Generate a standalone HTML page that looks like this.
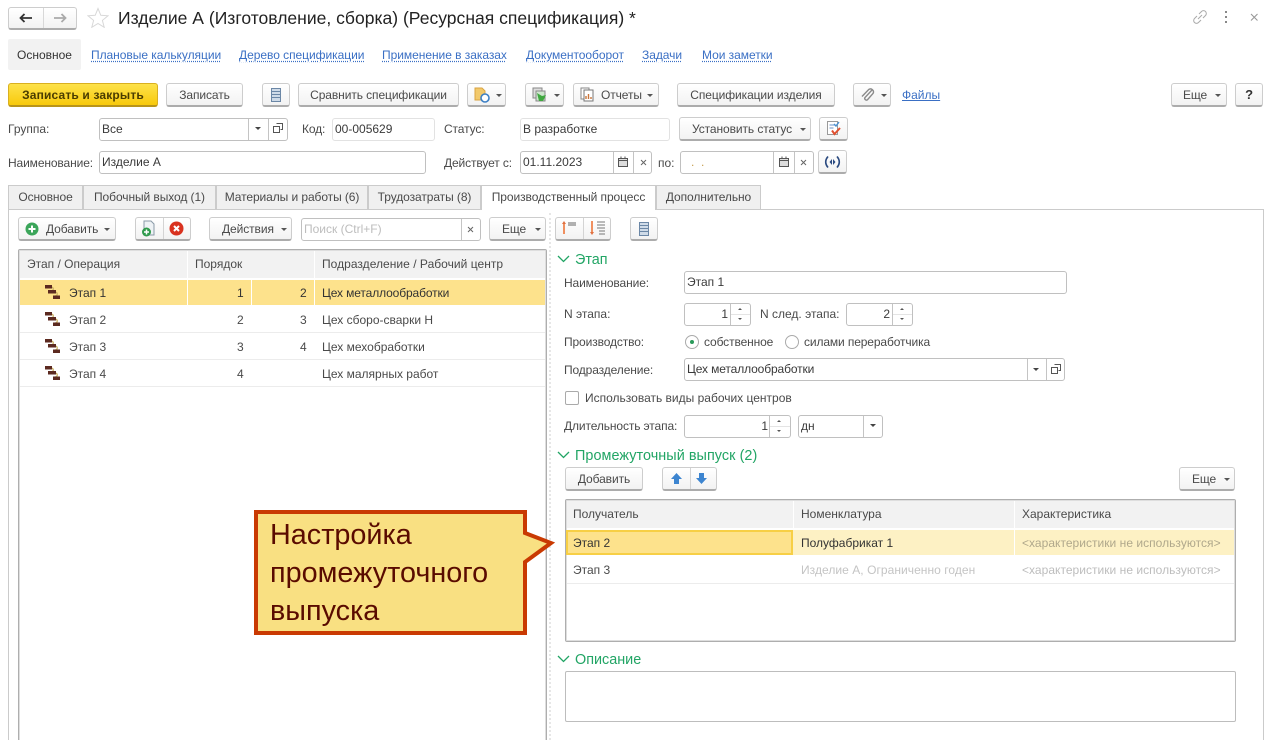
<!DOCTYPE html>
<html lang="ru"><head><meta charset="utf-8"><title>Изделие А</title>
<style>
html,body{margin:0;padding:0;background:#fff}
#p{position:relative;width:1273px;height:740px;overflow:hidden;background:#fff;font:12px/16px "Liberation Sans",Arial,sans-serif;color:#4a4a4a;filter:blur(.3px)}
#p div,#p svg,#p a{position:absolute}
.t{white-space:nowrap}
.r{text-align:right}
.l{color:#3a6fc4;text-decoration:underline;text-decoration-style:dotted;text-underline-offset:2px;white-space:nowrap;letter-spacing:-.04px}
.b{box-sizing:border-box;height:24px;border:1px solid #cdcdcd;border-bottom:2px solid #acacac;border-radius:3px;background:linear-gradient(#fff,#f2f2f2);text-align:center;line-height:22px;white-space:nowrap;color:#4a4a4a;letter-spacing:-.09px}
.i{box-sizing:border-box;height:23px;border:1px solid #c0c0c0;border-radius:3px;background:#fff;padding-left:2px;line-height:21px;white-space:nowrap;color:#3a3a3a}
.d{width:1px;background:#c4c4c4}
.c{width:0;height:0;border-left:3px solid transparent;border-right:3px solid transparent;border-top:3px solid #555}
.tab{box-sizing:border-box;top:185px;height:24px;background:#f0f0f0;border:1px solid #cbcbcb;border-bottom:none;text-align:center;line-height:22px;white-space:nowrap;color:#4a4a4a;letter-spacing:-.08px}
.g{color:#22a565;font-size:14.4px;white-space:nowrap}
.line{height:1px;background:#ececec}
.n{letter-spacing:-.12px}
.tb{box-sizing:border-box;border:1px solid #aeaeae;box-shadow:inset 0 0 0 1px #dedede;border-radius:2px}
</style></head><body><div id="p">

<!-- top bar -->
<div class="b" style="left:8px;top:7px;width:69px;height:23px"></div>
<div class="d" style="left:43px;top:8px;height:20px;background:#d8d8d8"></div>
<svg style="left:19px;top:13px" width="14" height="10"><path d="M1 5H13M5.500 1 1.500 5l4 4" fill="none" stroke="#333" stroke-width="1.800"/></svg>
<svg style="left:53px;top:13px" width="14" height="10"><path d="M1 5H13M8.500 1l4 4-4 4" fill="none" stroke="#aaa" stroke-width="1.800"/></svg>
<svg style="left:87px;top:7px" width="22" height="21"><path d="M11 1.500 13.800 8.300 21 8.800 15.400 13.400 17.200 20.300 11 16.500 4.800 20.300 6.600 13.400 1 8.800 8.200 8.300Z" fill="#fff" stroke="#d8d8d8"/></svg>
<div class="t" style="left:118px;top:8px;font-size:17.54px;line-height:20px;color:#222">Изделие А (Изготовление, сборка) (Ресурсная спецификация) *</div>
<svg style="left:1192px;top:9px" width="16" height="16"><path d="M7 5 9.500 2.500a2.600 2.600 0 0 1 4 4L11 9M9 11l-2.500 2.500a2.600 2.600 0 0 1-4-4L5 7M6 10l4-4" fill="none" stroke="#aaa" stroke-width="1"/></svg>
<svg style="left:1224px;top:11px" width="4" height="14"><path d="M1 1h2M1 6h2M1 11h2" stroke="#888" stroke-width="2"/></svg>
<svg style="left:1250px;top:13px" width="9" height="9"><path d="M1 1l6.500 6.500M7.500 1 1 7.500" stroke="#999" stroke-width="1.100"/></svg>

<!-- links -->
<div style="left:8px;top:39px;width:73px;height:31px;background:#f2f2f2;border-radius:2px"></div>
<div class="t" style="left:17px;top:47px;color:#333">Основное</div>
<a class="l" style="left:91px;top:47px">Плановые калькуляции</a>
<a class="l" style="left:239px;top:47px">Дерево спецификации</a>
<a class="l" style="left:382px;top:47px">Применение в заказах</a>
<a class="l" style="left:526px;top:47px">Документооборот</a>
<a class="l" style="left:642px;top:47px">Задачи</a>
<a class="l" style="left:702px;top:47px">Мои заметки</a>

<!-- command bar -->
<div class="b" style="left:8px;top:83px;width:150px;background:linear-gradient(#fde24a,#f8c90c);border-color:#d9b020;border-bottom-color:#b8941a;font-weight:bold;color:#4a3c00;letter-spacing:.16px">Записать и закрыть</div>
<div class="b" style="left:166px;top:83px;width:77px">Записать</div>
<div class="b" style="left:262px;top:83px;width:28px"></div>
<svg style="left:271px;top:88px" width="10" height="14"><rect x=".5" y=".5" width="9" height="13" fill="#cfdbe8" stroke="#6b87a6"/><path d="M1 3.500h8M1 6.500h8M1 9.500h8" stroke="#6b87a6"/></svg>
<div class="b" style="left:298px;top:83px;width:161px">Сравнить спецификации</div>
<div class="b" style="left:467px;top:83px;width:39px"></div>
<svg style="left:474px;top:87px" width="16" height="16"><path d="M1 1h7l3 3v9H1Z" fill="#f2c96b" stroke="#d9a441"/><circle cx="11" cy="11" r="4" fill="#fff" stroke="#3c7fc4" stroke-width="1.600"/></svg>
<div class="c" style="left:496px;top:94px"></div>
<div class="b" style="left:525px;top:83px;width:39px"></div>
<svg style="left:532px;top:87px" width="16" height="16"><rect x="1" y="1" width="9" height="10" fill="#ddd" stroke="#888"/><rect x="4" y="4" width="9" height="10" fill="#cfe6cf" stroke="#888"/><path d="M5 6l5 3 4-1-3 6H7Z" fill="#3fa83f"/></svg>
<div class="c" style="left:554px;top:94px"></div>
<div class="b" style="left:573px;top:83px;width:86px;text-align:left;padding-left:27px">Отчеты</div>
<svg style="left:580px;top:87px" width="15" height="15"><rect x="1" y="1" width="8" height="11" fill="#fff" stroke="#888"/><rect x="4" y="3" width="9" height="11" fill="#fff" stroke="#777"/><path d="M6 12V9M8.500 12V7M11 12V10" stroke="#c9743a" stroke-width="1.400"/></svg>
<div class="c" style="left:647px;top:94px"></div>
<div class="b" style="left:677px;top:83px;width:158px">Спецификации изделия</div>
<div class="b" style="left:853px;top:83px;width:38px"></div>
<svg style="left:861px;top:87px" width="14" height="15"><path d="M12 3 5 10.500a1.700 1.700 0 0 0 2.400 2.300L13 6.500a3 3 0 0 0-4.300-4L2 9.500" fill="none" stroke="#8a8a8a" stroke-width="1.400" transform="translate(-1 0)"/></svg>
<div class="c" style="left:881px;top:94px"></div>
<a class="t" style="left:902px;top:87px;color:#3a6fc4;text-decoration:underline">Файлы</a>
<div class="b" style="left:1171px;top:83px;width:56px;text-align:left;padding-left:11px">Еще</div>
<div class="c" style="left:1215px;top:94px"></div>
<div class="b" style="left:1235px;top:83px;width:28px;font-weight:bold;font-size:13px;color:#333">?</div>

<!-- row 1 -->
<div class="t" style="left:8px;top:121px">Группа:</div>
<div class="i" style="left:99px;top:118px;width:189px">Все</div>
<div class="d" style="left:248px;top:119px;height:21px"></div><div class="d" style="left:268px;top:119px;height:21px"></div>
<div class="c" style="left:255px;top:127px;border-top-color:#444"></div>
<svg style="left:273px;top:123px" width="10" height="10"><path d="M3.500.5h6v6h-2M.5 3.500h6v6h-6Z" fill="none" stroke="#555"/></svg>
<div class="t n" style="left:302px;top:121px">Код:</div>
<div class="i" style="left:332px;top:118px;width:103px;border-color:#e2e2e2">00-005629</div>
<div class="t n" style="left:444px;top:121px">Статус:</div>
<div class="i" style="left:520px;top:118px;width:150px;border-color:#e2e2e2">В разработке</div>
<div class="b" style="left:679px;top:117px;width:132px;text-align:left;padding-left:12px">Установить статус</div>
<div class="c" style="left:800px;top:128px"></div>
<div class="b" style="left:819px;top:117px;width:29px"></div>
<svg style="left:826px;top:120px" width="16" height="17"><rect x="1.500" y="1.500" width="10" height="13" fill="#fff" stroke="#9a9a9a"/><path d="M3.500 5h5M3.500 8h4" stroke="#6b93c9"/><path d="M6 10.500 8.500 14 14 8" fill="none" stroke="#e05030" stroke-width="2"/><path d="M8 4l2 2 3-4" fill="none" stroke="#4a90d0" stroke-width="1.400"/></svg>

<!-- row 2 -->
<div class="t n" style="left:8px;top:155px">Наименование:</div>
<div class="i" style="left:99px;top:151px;width:327px">Изделие А</div>
<div class="t n" style="left:444px;top:155px">Действует с:</div>
<div class="i" style="left:520px;top:151px;width:132px">01.11.2023</div>
<div class="d" style="left:613px;top:152px;height:21px"></div><div class="d" style="left:633px;top:152px;height:21px"></div>
<svg style="left:617px;top:156px" width="12" height="12"><rect x="1.500" y="2.500" width="9" height="8" fill="#ddd" stroke="#555"/><path d="M1.500 4.500h9M4 .5v2M8 .5v2" stroke="#555"/></svg>
<svg style="left:640px;top:159px" width="7" height="7"><path d="M1 1l5 5M6 1 1 6" stroke="#666"/></svg>
<div class="t" style="left:658px;top:155px">по:</div>
<div class="i" style="left:680px;top:151px;width:134px;padding-left:10px;color:#c8a050">. &nbsp;.</div>
<div class="d" style="left:773px;top:152px;height:21px"></div><div class="d" style="left:794px;top:152px;height:21px"></div>
<svg style="left:778px;top:156px" width="12" height="12"><rect x="1.500" y="2.500" width="9" height="8" fill="#ddd" stroke="#555"/><path d="M1.500 4.500h9M4 .5v2M8 .5v2" stroke="#555"/></svg>
<svg style="left:800px;top:159px" width="7" height="7"><path d="M1 1l5 5M6 1 1 6" stroke="#666"/></svg>
<div class="b" style="left:818px;top:150px;width:29px"></div>
<svg style="left:824px;top:155px" width="17" height="14"><path d="M4 1.500C1 5 1 9 4 12.500M13 1.500C16 5 16 9 13 12.500" fill="none" stroke="#2b4a80" stroke-width="1.700"/><path d="M8 4 5.500 7 8 10ZM9 4l2.500 3L9 10Z" fill="#2b4a80"/></svg>

<!-- tabs -->
<div style="box-sizing:border-box;left:8px;top:209px;width:1256px;height:540px;border:1px solid #cbcbcb"></div>
<div class="tab" style="left:8px;width:75px">Основное</div>
<div class="tab" style="left:83px;width:133px">Побочный выход (1)</div>
<div class="tab" style="left:216px;width:152px">Материалы и работы (6)</div>
<div class="tab" style="left:368px;width:113px">Трудозатраты (8)</div>
<div class="tab" style="left:481px;width:175px;height:25px;background:#fff;z-index:2">Производственный процесс</div>
<div class="tab" style="left:656px;width:105px">Дополнительно</div>

<!-- left toolbar -->
<div class="b" style="left:18px;top:217px;width:98px;text-align:left;padding-left:27px">Добавить</div>
<svg style="left:25px;top:222px" width="14" height="14"><circle cx="7" cy="7" r="6.500" fill="#3ba55a"/><path d="M7 3.500v7M3.500 7h7" stroke="#fff" stroke-width="2"/></svg>
<div class="c" style="left:104px;top:228px"></div>
<div class="b" style="left:135px;top:217px;width:56px"></div>
<div class="d" style="left:163px;top:218px;height:21px;background:#d4d4d4"></div>
<svg style="left:141px;top:220px" width="16" height="18"><path d="M3 1h7l3 3v11H3Z" fill="#eef2f5" stroke="#8a9aa8"/><circle cx="5.500" cy="12" r="4.500" fill="#2f9a4c"/><path d="M5.500 9.500v5M3 12h5" stroke="#fff" stroke-width="1.500"/></svg>
<svg style="left:169px;top:221px" width="15" height="15"><circle cx="7.500" cy="7.500" r="7" fill="#d9321f"/><path d="M5 5l5 5M10 5l-5 5" stroke="#fff" stroke-width="2"/></svg>
<div class="b" style="left:209px;top:217px;width:83px;text-align:left;padding-left:12px">Действия</div>
<div class="c" style="left:281px;top:228px"></div>
<div class="i" style="left:301px;top:218px;width:180px;color:#bdbdbd">Поиск (Ctrl+F)</div>
<div class="d" style="left:461px;top:219px;height:21px"></div>
<svg style="left:467px;top:226px" width="7" height="7"><path d="M1 1l5 5M6 1 1 6" stroke="#666"/></svg>
<div class="b" style="left:489px;top:217px;width:57px;text-align:left;padding-left:12px">Еще</div>
<div class="c" style="left:535px;top:228px"></div>
<div style="left:549px;top:213px;height:527px;border-left:2px dotted #e6e6e6"></div>

<!-- left table -->
<div class="tb" style="left:18px;top:249px;width:529px;height:500px"></div>
<div style="left:20px;top:251px;width:525px;height:27px;background:#f2f2f2"></div>
<div class="d" style="left:187px;top:251px;height:27px;background:#fff"></div>
<div class="d" style="left:314px;top:251px;height:27px;background:#fff"></div>
<div class="t" style="left:27px;top:256px">Этап / Операция</div>
<div class="t" style="left:195px;top:256px">Порядок</div>
<div class="t" style="left:322px;top:256px;letter-spacing:.03px">Подразделение / Рабочий центр</div>
<div style="left:20px;top:280px;width:525px;height:25px;background:#fde28c"></div>
<div class="d" style="left:187px;top:280px;height:25px;background:#fff"></div>
<div class="d" style="left:251px;top:280px;height:25px;background:#fff"></div>
<div class="d" style="left:314px;top:280px;height:25px;background:#fff"></div>
<div class="line" style="left:20px;top:332px;width:525px"></div>
<div class="line" style="left:20px;top:359px;width:525px"></div>
<div class="line" style="left:20px;top:386px;width:525px"></div>
<svg style="left:44px;top:284px" width="17" height="16"><path d="M7 3c3 0 3 4 0 4M11 8c3 0 3 4 0 4" fill="none" stroke="#c9b060" stroke-width="1.300"/><path d="M1 1h7v3.500H1ZM4 6h8v3.500H4ZM9 11.500h7V15H9Z" fill="#5c2a20"/></svg>
<svg style="left:44px;top:311px" width="17" height="16"><path d="M7 3c3 0 3 4 0 4M11 8c3 0 3 4 0 4" fill="none" stroke="#c9b060" stroke-width="1.300"/><path d="M1 1h7v3.500H1ZM4 6h8v3.500H4ZM9 11.500h7V15H9Z" fill="#5c2a20"/></svg>
<svg style="left:44px;top:338px" width="17" height="16"><path d="M7 3c3 0 3 4 0 4M11 8c3 0 3 4 0 4" fill="none" stroke="#c9b060" stroke-width="1.300"/><path d="M1 1h7v3.500H1ZM4 6h8v3.500H4ZM9 11.500h7V15H9Z" fill="#5c2a20"/></svg>
<svg style="left:44px;top:365px" width="17" height="16"><path d="M7 3c3 0 3 4 0 4M11 8c3 0 3 4 0 4" fill="none" stroke="#c9b060" stroke-width="1.300"/><path d="M1 1h7v3.500H1ZM4 6h8v3.500H4ZM9 11.500h7V15H9Z" fill="#5c2a20"/></svg>
<div class="t" style="left:69px;top:285px;color:#333">Этап 1</div>
<div class="t" style="left:69px;top:312px">Этап 2</div>
<div class="t" style="left:69px;top:339px">Этап 3</div>
<div class="t" style="left:69px;top:366px">Этап 4</div>
<div class="t" style="left:237px;top:285px;color:#333">1</div><div class="t" style="left:300px;top:285px;color:#333">2</div>
<div class="t" style="left:237px;top:312px">2</div><div class="t" style="left:300px;top:312px">3</div>
<div class="t" style="left:237px;top:339px">3</div><div class="t" style="left:300px;top:339px">4</div>
<div class="t" style="left:237px;top:366px">4</div>
<div class="t n" style="left:322px;top:285px;color:#333">Цех металлообработки</div>
<div class="t" style="left:322px;top:312px">Цех сборо-сварки Н</div>
<div class="t" style="left:322px;top:339px">Цех мехобработки</div>
<div class="t" style="left:322px;top:366px">Цех малярных работ</div>

<!-- right toolbar -->
<div class="b" style="left:555px;top:217px;width:56px"></div>
<div class="d" style="left:583px;top:218px;height:21px;background:#d4d4d4"></div>
<svg style="left:561px;top:220px" width="18" height="15"><path d="M3 14V3" stroke="#f09060" stroke-width="2"/><path d="M3 1 1 4h4Z" fill="#e07040"/><path d="M7 3h8M7 5h8" stroke="#666"/></svg>
<svg style="left:589px;top:220px" width="18" height="17"><path d="M3 1v12" stroke="#f09060" stroke-width="2"/><path d="M3 15 1 12h4Z" fill="#e07040"/><path d="M8 2h8M8 5h8M8 8h8M10 11h6M10 14h6" stroke="#777"/></svg>
<div class="b" style="left:630px;top:217px;width:28px"></div>
<svg style="left:639px;top:222px" width="10" height="14"><rect x=".5" y=".5" width="9" height="13" fill="#cfdbe8" stroke="#6b87a6"/><path d="M1 3.500h8M1 6.500h8M1 9.500h8" stroke="#6b87a6"/></svg>

<!-- Этап -->
<svg style="left:557px;top:255px" width="13" height="8"><path d="M1 1l5.500 5.500L12 1" fill="none" stroke="#22a565" stroke-width="1.300"/></svg>
<div class="g" style="left:575px;top:252px">Этап</div>
<div class="t n" style="left:564px;top:275px">Наименование:</div>
<div class="i" style="left:684px;top:271px;width:383px">Этап 1</div>
<div class="t" style="left:564px;top:306px">N этапа:</div>
<div class="i r" style="left:684px;top:303px;width:67px;padding-right:22px">1</div>
<div class="d" style="left:730px;top:304px;height:21px"></div>
<div class="d" style="left:731px;top:314px;height:1px;width:19px;background:#e4e4e4"></div>
<div class="t" style="left:760px;top:306px">N след. этапа:</div>
<div class="i r" style="left:846px;top:303px;width:67px;padding-right:22px">2</div>
<div class="d" style="left:892px;top:304px;height:21px"></div>
<div class="d" style="left:893px;top:314px;height:1px;width:19px;background:#e4e4e4"></div>
<div class="t n" style="left:564px;top:334px">Производство:</div>
<div style="box-sizing:border-box;left:685px;top:335px;width:14px;height:14px;border:1px solid #aaa;border-radius:50%"></div>
<div style="left:690px;top:340px;width:4px;height:4px;background:#2a9a5a;border-radius:50%"></div>
<div class="t n" style="left:704px;top:334px">собственное</div>
<div style="box-sizing:border-box;left:785px;top:335px;width:14px;height:14px;border:1px solid #aaa;border-radius:50%"></div>
<div class="t n" style="left:804px;top:334px">силами переработчика</div>
<div class="t n" style="left:564px;top:362px">Подразделение:</div>
<div class="i n" style="left:684px;top:358px;width:381px">Цех металлообработки</div>
<div class="d" style="left:1027px;top:359px;height:21px"></div><div class="d" style="left:1046px;top:359px;height:21px"></div>
<div class="c" style="left:1033px;top:368px;border-top-color:#444"></div>
<svg style="left:1051px;top:364px" width="10" height="10"><path d="M3.500.5h6v6h-2M.5 3.500h6v6h-6Z" fill="none" stroke="#555"/></svg>
<div style="box-sizing:border-box;left:565px;top:391px;width:14px;height:14px;border:1px solid #aaa;border-radius:2px"></div>
<div class="t" style="left:585px;top:390px">Использовать виды рабочих центров</div>
<div class="t n" style="left:564px;top:418px">Длительность этапа:</div>
<div class="i r" style="left:684px;top:415px;width:107px;padding-right:22px">1</div>
<div class="d" style="left:769px;top:416px;height:21px"></div>
<div class="d" style="left:770px;top:426px;height:1px;width:20px;background:#e4e4e4"></div>
<div class="i" style="left:798px;top:415px;width:85px">дн</div>
<div class="d" style="left:863px;top:416px;height:21px"></div>
<div class="c" style="left:870px;top:424px;border-top-color:#444"></div>

<!-- spinner arrows -->
<svg style="left:737px;top:306px" width="6" height="16"><path d="M1 4 3 2l2 2ZM1 12l2 2 2-2Z" fill="#555"/></svg>
<svg style="left:899px;top:306px" width="6" height="16"><path d="M1 4 3 2l2 2ZM1 12l2 2 2-2Z" fill="#555"/></svg>
<svg style="left:776px;top:418px" width="6" height="16"><path d="M1 4 3 2l2 2ZM1 12l2 2 2-2Z" fill="#555"/></svg>

<!-- Промежуточный выпуск -->
<svg style="left:557px;top:451px" width="13" height="8"><path d="M1 1l5.500 5.500L12 1" fill="none" stroke="#22a565" stroke-width="1.300"/></svg>
<div class="g" style="left:575px;top:448px;letter-spacing:.06px">Промежуточный выпуск (2)</div>
<div class="b" style="left:565px;top:467px;width:78px">Добавить</div>
<div class="b" style="left:662px;top:467px;width:55px"></div>
<div class="d" style="left:690px;top:468px;height:21px;background:#d4d4d4"></div>
<svg style="left:670px;top:472px" width="13" height="13"><path d="M6.500 1 12 7H9v5H4V7H1Z" fill="#3d85d0"/></svg>
<svg style="left:695px;top:472px" width="13" height="13"><path d="M6.500 12 12 6H9V1H4v5H1Z" fill="#3d85d0"/></svg>
<div class="b" style="left:1179px;top:467px;width:56px;text-align:left;padding-left:12px">Еще</div>
<div class="c" style="left:1224px;top:478px"></div>

<!-- right table -->
<div class="tb" style="left:565px;top:499px;width:671px;height:143px"></div>
<div style="left:567px;top:501px;width:667px;height:27px;background:#f2f2f2"></div>
<div class="d" style="left:793px;top:501px;height:27px;background:#fff"></div>
<div class="d" style="left:1014px;top:501px;height:27px;background:#fff"></div>
<div class="t" style="left:573px;top:506px">Получатель</div>
<div class="t" style="left:801px;top:506px">Номенклатура</div>
<div class="t" style="left:1022px;top:506px">Характеристика</div>
<div style="left:793px;top:530px;width:441px;height:25px;background:#fdf1c4"></div>
<div class="d" style="left:1014px;top:530px;height:25px;background:#fff"></div>
<div style="box-sizing:border-box;left:566px;top:530px;width:227px;height:25px;background:#fde28c;border:2px solid #f7cf45"></div>
<div class="line" style="left:567px;top:583px;width:667px"></div>
<div class="t" style="left:573px;top:535px;color:#333">Этап 2</div>
<div class="t" style="left:801px;top:535px;color:#333">Полуфабрикат 1</div>
<div class="t" style="left:1022px;top:535px;color:#b0a88c;letter-spacing:.03px">&lt;характеристики не используются&gt;</div>
<div class="t" style="left:573px;top:562px">Этап 3</div>
<div class="t" style="left:801px;top:562px;color:#c4c4c4;letter-spacing:.05px">Изделие А, Ограниченно годен</div>
<div class="t" style="left:1022px;top:562px;color:#bdbdbd;letter-spacing:.03px">&lt;характеристики не используются&gt;</div>

<!-- Описание -->
<svg style="left:557px;top:655px" width="13" height="8"><path d="M1 1l5.500 5.500L12 1" fill="none" stroke="#22a565" stroke-width="1.300"/></svg>
<div class="g" style="left:575px;top:652px">Описание</div>
<div style="box-sizing:border-box;left:565px;top:671px;width:671px;height:51px;border:1px solid #bdbdbd;border-radius:2px"></div>

<!-- callout -->
<svg style="left:250px;top:506px;z-index:5" width="310" height="134"><path d="M6 6H275V27L301 37 275 56V127H6Z" fill="#f9e082" stroke="#c93a02" stroke-width="4" stroke-linejoin="miter"/></svg>
<div style="left:270px;top:516px;z-index:6;font-size:28.8px;line-height:38px;color:#5a0b00;white-space:nowrap">Настройка<br>промежуточного<br>выпуска</div>

</div></body></html>
